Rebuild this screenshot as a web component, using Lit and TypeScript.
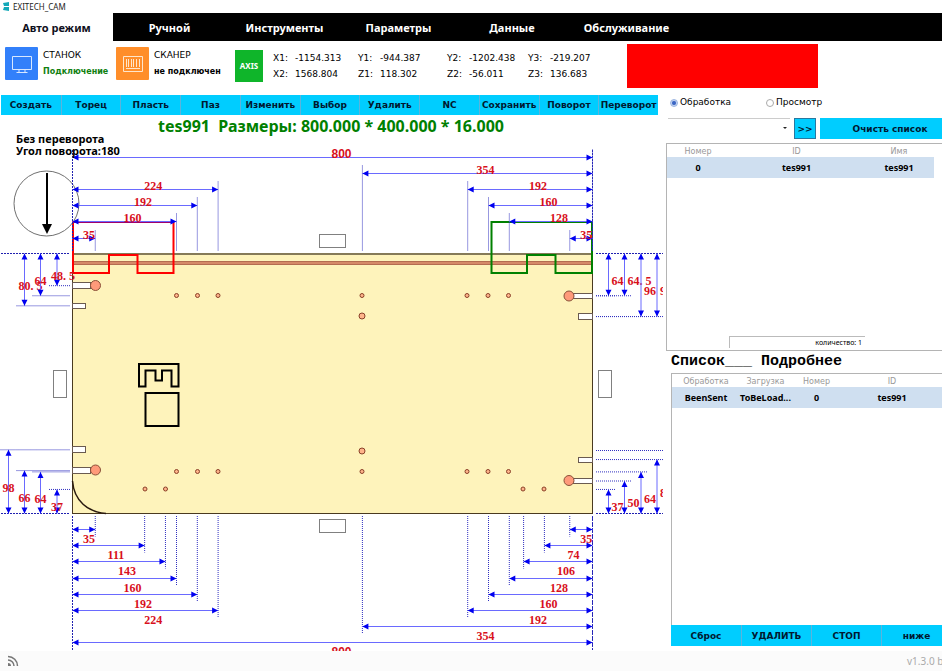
import { LitElement, html, svg, css } from "lit";
import { customElement, state } from "lit/decorators.js";
import { classMap } from "lit/directives/class-map.js";

const TABS = ["Авто режим", "Ручной", "Инструменты", "Параметры", "Данные", "Обслуживание"];
const TOOLS = ["Создать", "Торец", "Пласть", "Паз", "Изменить", "Выбор", "Удалить", "NC", "Сохранить", "Поворот", "Переворот"];
const AXES: [string, string][] = [
  ["X1:", "-1154.313"], ["Y1:", "-944.387"], ["Y2:", "-1202.438"], ["Y3:", "-219.207"],
  ["X2:", "1568.804"], ["Z1:", "118.302"], ["Z2:", "-56.011"], ["Z3:", "136.683"],
];

/* Board geometry in drawing units; one millimetre is 0.65 units. */
const SCALE = 0.65;
const L = 72.5;
const R = 592.5;
const T = 253.5;
const B = 513.5;

type HDim = { mm: number; y: number; from: "l" | "r" };
type VDim = { mm: number; x: number; from: "t" | "b"; side: "l" | "r"; text: string };

const TOP: HDim[] = [
  { mm: 800, y: 157.5, from: "l" },
  { mm: 224, y: 189.5, from: "l" }, { mm: 192, y: 205.5, from: "l" },
  { mm: 160, y: 221.5, from: "l" }, { mm: 35, y: 238.5, from: "l" },
  { mm: 354, y: 173.5, from: "r" }, { mm: 192, y: 189.5, from: "r" },
  { mm: 160, y: 205.5, from: "r" }, { mm: 128, y: 221.5, from: "r" },
  { mm: 35, y: 238.5, from: "r" },
];
const BOTTOM: HDim[] = [
  { mm: 35, y: 529.5, from: "l" }, { mm: 111, y: 545.5, from: "l" },
  { mm: 143, y: 561.5, from: "l" }, { mm: 160, y: 578.5, from: "l" },
  { mm: 192, y: 594.5, from: "l" }, { mm: 224, y: 610.5, from: "l" },
  { mm: 800, y: 642.5, from: "l" },
  { mm: 35, y: 529.5, from: "r" }, { mm: 74, y: 545.5, from: "r" },
  { mm: 106, y: 561.5, from: "r" }, { mm: 128, y: 578.5, from: "r" },
  { mm: 160, y: 594.5, from: "r" }, { mm: 192, y: 610.5, from: "r" },
  { mm: 354, y: 626.5, from: "r" },
];
const SIDES: VDim[] = [
  { mm: 80.5, x: 24.5, from: "t", side: "l", text: "80. 5" },
  { mm: 65, x: 40.5, from: "t", side: "l", text: "64" },
  { mm: 49.5, x: 57, from: "t", side: "l", text: "48. 5" },
  { mm: 98, x: 8.5, from: "b", side: "l", text: "98" },
  { mm: 66, x: 24.5, from: "b", side: "l", text: "66" },
  { mm: 64, x: 40.5, from: "b", side: "l", text: "64" },
  { mm: 37, x: 57, from: "b", side: "l", text: "37" },
  { mm: 65, x: 608.5, from: "t", side: "r", text: "64" },
  { mm: 65, x: 624.5, from: "t", side: "r", text: "64. 5" },
  { mm: 97, x: 641, from: "t", side: "r", text: "96" },
  { mm: 97, x: 657, from: "t", side: "r", text: "96" },
  { mm: 37, x: 608.5, from: "b", side: "r", text: "37" },
  { mm: 50, x: 624.5, from: "b", side: "r", text: "50" },
  { mm: 64, x: 641, from: "b", side: "r", text: "64" },
  { mm: 83, x: 657, from: "b", side: "r", text: "82" },
];
const HOLES: [number, number, number][] = [
  ...[176.5, 197.5, 218, 362, 467, 488, 508.5].flatMap((x): [number, number, number][] => [[x, 295.5, 2], [x, 471.5, 2]]),
  ...[145, 165.5, 523, 544].map((x): [number, number, number] => [x, 489, 2]),
  [362, 316, 3], [362, 451, 3],
  [95.5, 285.5, 5], [95.5, 470, 5], [569, 296, 5], [569, 480.5, 5],
];
const SLOTS: [number, number, number, number][] = [
  [72.5, 282.5, 18, 6], [72.5, 303.5, 13, 5], [72.5, 446.5, 13, 6], [72.5, 467.5, 18, 6],
  [573.5, 293.5, 19, 5], [578.5, 313.5, 14, 6], [578.5, 457.5, 14, 5], [573.5, 478.5, 19, 5],
];
const CLAMPS: [number, number, number, number][] = [
  [319.5, 234.5, 26, 13], [319.5, 519.5, 26, 13], [53.5, 370.5, 13, 27], [598.5, 370.5, 13, 27],
];

function hDim(d: HDim, top: boolean) {
  const a = d.from === "l" ? L : R - d.mm * SCALE;
  const b = d.from === "l" ? L + d.mm * SCALE : R;
  const free = d.from === "l" ? b : a;
  const y = d.y;
  return svg`
    <line class="ext" x1=${free} x2=${free} y1=${top ? y - 8 : 516} y2=${top ? 251 : y + 7}></line>
    <line class="dim" x1=${a} x2=${b} y1=${y} y2=${y}></line>
    <path class="head" d="M${a} ${y}l6 -3v6zM${b} ${y}l-6 -3v6z"></path>
    <text class=${classMap({ num: true, sans: d.mm === 800 })} x=${(a + b) / 2 - 1} y=${top ? y + 0.5 : y + 13}>${d.mm}</text>`;
}

function vDim(d: VDim) {
  const a = d.from === "t" ? T : B - d.mm * SCALE;
  const b = d.from === "t" ? T + d.mm * SCALE : B;
  const free = d.from === "t" ? b : a;
  const left = d.side === "l";
  const x = d.x;
  return svg`
    <line class="ext" y1=${free} y2=${free} x1=${left ? x - 8 : 596} x2=${left ? 70 : x + 7}></line>
    <line class="dim" x1=${x} x2=${x} y1=${a} y2=${b}></line>
    <path class="head" d="M${x} ${a}l-3 6h6zM${x} ${b}l-3 -6h6z"></path>
    <text class="num" x=${left ? x - 6 : x + 3} y=${(a + b) / 2 + 10}>${d.text}</text>`;
}

@customElement("board-plan")
export class BoardPlan extends LitElement {
  static styles = css`
    :host { display: block; }
    svg { display: block; width: 100%; height: auto; overflow: hidden; }
    .ext { stroke: #3030c0; stroke-width: 1; stroke-dasharray: 1 1; }
    .edge { stroke: #2020b0; stroke-width: 1; stroke-dasharray: 2 1; }
    .dim { stroke: #6a6aff; stroke-width: 1; }
    .head { fill: #0000f0; }
    .num { font: bold 12px "Liberation Serif", serif; fill: #d8101c; }
    .sans { font-family: "Liberation Sans", sans-serif; }
    .board { fill: #fef3bb; stroke: #4a3a20; }
    .rim { stroke: #857a58; stroke-width: 2; }
    .groove { fill: #d58a68; stroke: #b46c50; }
    .hole { fill: #ffb48a; stroke: #8a4028; }
    .drill { fill: #ff9a7a; stroke: #8a5038; }
    .slot { fill: #fff; stroke: #6a5a50; }
    .clamp { fill: #fff; stroke: #808080; }
    .ring { fill: none; stroke: #707070; }
    .thin { fill: none; stroke: #2a1a10; stroke-width: 1.5; }
    .mark { fill: none; stroke: #000; stroke-width: 2; }
    .red { fill: none; stroke: #ff0000; stroke-width: 2; }
    .lap { stroke: #a0006a; stroke-width: 2; }
    .green { fill: none; stroke: #008000; stroke-width: 2; }
    .note { font: bold 11px "Noto Sans", sans-serif; fill: #000; }
  `;

  render() {
    return html`<svg viewBox="0 135 663 516" role="img" aria-label="Чертёж детали">
      <rect class="board" x=${L} y=${T} width=${R - L} height=${B - T}></rect>
      <line class="rim" x1=${L} x2=${R} y1="254" y2="254"></line>
      <rect class="groove" x=${L} y="261.5" width=${R - L} height="3"></rect>
      ${CLAMPS.map(([x, y, w, h]) => svg`<rect class="clamp" x=${x} y=${y} width=${w} height=${h}></rect>`)}
      ${SLOTS.map(([x, y, w, h]) => svg`<rect class="slot" x=${x} y=${y} width=${w} height=${h}></rect>`)}
      ${HOLES.map(([x, y, r]) => svg`<circle class=${r > 3 ? "drill" : "hole"} cx=${x} cy=${y} r=${r}></circle>`)}
      <path class="thin" d="M72.5 481C74 501 88 512 106 513.5"></path>
      <path class="mark" d="M139 364H178.500V386.500H171.500V370.500H162V380.500H155.500V370.500H145.500V386.500H139Z"></path>
      <rect class="mark" x="145.500" y="393" width="33" height="33"></rect>
      <path class="green" d="M491.500 222H592V273H555.500V255H527V273H491.500Z"></path>
      <path class="red" d="M73 222H173.500V273H137.500V255H109V273H73Z"></path>
      <line class="lap" x1="73" x2="173" y1="222" y2="222"></line>
      <circle class="ring" cx="46.500" cy="203.500" r="32.500"></circle>
      <path class="mark" d="M47 173V226"></path>
      <path d="M47 234l-5 -10h10z"></path>
      <line class="edge" x1=${L} x2=${L} y1="150" y2="251"></line>
      <line class="edge" x1=${R} x2=${R} y1="150" y2="251"></line>
      <line class="edge" x1=${L} x2=${L} y1="516" y2="651"></line>
      <line class="edge" x1=${R} x2=${R} y1="516" y2="651"></line>
      <line class="edge" x1="1" x2="70" y1=${T} y2=${T}></line>
      <line class="edge" x1="1" x2="70" y1=${B} y2=${B}></line>
      <line class="edge" x1="596" x2="663" y1=${T} y2=${T}></line>
      <line class="edge" x1="596" x2="663" y1=${B} y2=${B}></line>
      <line class="ext" x1="596" x2="663" y1="450.500" y2="450.500"></line>
      ${TOP.map((d) => hDim(d, true))}
      ${BOTTOM.map((d) => hDim(d, false))}
      ${SIDES.map(vDim)}
      <text class="note" x="16" y="143">Без переворота</text>
      <text class="note" x="16" y="155">Угол поворота:180</text>
    </svg>`;
  }
}

@customElement("app-root")
export class AppRoot extends LitElement {
  @state() private tab = 0;

  static styles = css`
    :host { display: flex; flex-direction: column; min-height: 100vh; overflow: hidden; background: #fff; color: #000; font: 10px "Noto Sans", sans-serif; }
    * { box-sizing: border-box; }
    button, select, input { font: inherit; color: inherit; margin: 0; padding: 0; border: 0; border-radius: 0; }
    .title { display: flex; align-items: center; gap: 4px; height: 13px; padding-left: 3px; font-size: 8px; line-height: 13px; color: #222; }
    .nav { display: grid; grid-template-columns: 113px 113px 117px 111px 116px 113px; height: 28px; background: #000; }
    .tab { background: #000; color: #fff; font-size: 11px; font-weight: bold; }
    .tab.on { background: #fff; color: #101020; }
    .status { display: flex; align-items: flex-start; height: 54px; padding: 3px 0 0 5px; font: 9px "DejaVu Sans", sans-serif; }
    .device { display: grid; grid-template-columns: 33px 1fr; column-gap: 5px; width: 111px; padding-top: 3px; white-space: nowrap; }
    .device.scan { width: 119px; }
    .device svg { grid-row: span 2; }
    .device span { line-height: 16px; }
    .state { font-weight: bold; font-size: 8px; }
    .ok { color: #108010; }
    .axis { width: 28px; height: 32px; margin-top: 6px; background: #0fb52a; color: #fff; font: bold 8px/32px "Noto Sans", sans-serif; text-align: center; }
    .axes { display: grid; grid-template-columns: 85px 89px 81px 99px; margin: 6px 0 0 10px; line-height: 16px; }
    .cell { display: flex; }
    .cell b { width: 22px; font-weight: normal; }
    .alarm { width: 191px; height: 44px; background: #f00; }
    .main { display: grid; grid-template-columns: minmax(0, 1fr) 276px; flex: 1; }
    .tools { display: grid; grid-template-columns: repeat(11, minmax(0, 1fr)); height: 20px; margin: 0 8px 0 1px; }
    .cyan { background: #00cdff; color: #001830; font: bold 9px "DejaVu Sans", sans-serif; white-space: nowrap; }
    .tools .cyan + .cyan, .actions .cyan + .cyan { border-left: 1px solid #5cb4dc; }
    .size { margin: 0; height: 20px; padding-right: 4px; font-size: 16px; line-height: 22px; font-weight: bold; color: #008000; text-align: center; white-space: pre; }
    board-plan { margin-right: 3px; }
    .side { display: flex; flex-direction: column; overflow: hidden; }
    .modes { display: flex; height: 15px; padding-left: 4px; font: 9px/15px "DejaVu Sans", sans-serif; }
    .modes label { display: flex; align-items: center; gap: 2px; width: 96px; }
    .modes input { width: 8px; height: 8px; appearance: none; border: 1px solid #aaa; border-radius: 50%; background: #fff; }
    .modes input:checked { border-color: #9ab4e0; background: radial-gradient(#3b66c4 35%, #c4d4f2 60%); }
    .pick { display: flex; gap: 4px; height: 21px; margin: 8px 0 4px 2px; }
    .combo { position: relative; flex: none; width: 122px; border-top: 1px solid #ccc; }
    .combo select { width: 100%; height: 19px; appearance: none; background: none; }
    .combo::after { content: ""; position: absolute; right: 3px; top: 8px; border: 2px solid transparent; border-top-color: #222; pointer-events: none; }
    .go { flex: none; width: 22px; border: 1px solid #2878a0; }
    .clear { flex: none; width: 140px; }
    .panel { display: flex; flex-direction: column; border: 1px solid #b4b4b4; border-right: 0; }
    .queue { height: 208px; }
    .details { flex: 1; margin-left: 5px; border-bottom: 0; }
    table { border-collapse: collapse; table-layout: fixed; flex: none; width: 267px; }
    .details table { width: 270px; }
    th, td { padding: 0; text-align: center; white-space: nowrap; }
    th { height: 13px; padding-top: 3px; color: #999; font: 8px/10px "DejaVu Sans", sans-serif; }
    td { height: 21px; background: #cfdff0; font: bold 9px/21px "Noto Sans", sans-serif; }
    .c62 { width: 62px; } .c135 { width: 135px; } .c70 { width: 70px; } .c68 { width: 68px; } .c51 { width: 51px; } .c100 { width: 100px; }
    .count { width: 136px; height: 12px; margin: auto 0 2px 62px; padding-right: 3px; border: 1px solid #bbb; border-width: 1px 0 0 1px; font-size: 7px; line-height: 11px; text-align: right; }
    .views { height: 22px; margin: 0 0 0 5px; font: bold 15px/22px "Liberation Mono", monospace; white-space: pre; }
    .actions { display: grid; grid-template-columns: repeat(4, 70px); height: 21px; margin: 0 0 5px 5px; }
    .foot { display: flex; align-items: center; justify-content: space-between; height: 20px; padding-left: 7px; background: #fbfbfb; overflow: hidden; }
    .version { width: 35px; color: #aaa; font-size: 10px; white-space: nowrap; }
  `;

  render() {
    return html`
      <div class="title">
        <svg width="6" height="9" viewBox="0 0 6 9"><path fill="#12a8b8" d="M0 1L6 0V4H1zM1 5H6V9L0 8z"></path></svg>
        <span>EXITECH_CAM</span>
      </div>
      <nav class="nav">
        ${TABS.map((t, i) => html`<button class=${classMap({ tab: true, on: i === this.tab })} @click=${() => (this.tab = i)}>${t}</button>`)}
      </nav>
      <header class="status">
        <div class="device">
          <svg width="33" height="33" viewBox="0 0 33 33"><rect width="33" height="33" rx="1" fill="#3280fa"></rect><path fill="none" stroke="#d8e8ff" d="M7.500 9.500H26.500V22.500H7.500ZM14 22.500V25.500M20 22.500V25.500M11.500 25.500H22.500"></path></svg>
          <span>СТАНОК</span><span class="state ok">Подключение</span>
        </div>
        <div class="device scan">
          <svg width="33" height="33" viewBox="0 0 33 33"><rect width="33" height="33" rx="1" fill="#ff8e2a"></rect><path fill="none" stroke="#ffe6cc" d="M7.500 9.500H26.500V24.500H7.500ZM10.500 12V20M12.500 12V20M15.500 12V20M17.500 12V20M20.500 12V20M23.500 12V20M10 21.500H24"></path></svg>
          <span>СКАНЕР</span><span class="state">не подключен</span>
        </div>
        <div class="axis">AXIS</div>
        <div class="axes">
          ${AXES.map(([k, v]) => html`<div class="cell"><b>${k}</b><span>${v}</span></div>`)}
        </div>
        <div class="alarm"></div>
      </header>
      <main class="main">
        <section>
          <div class="tools">${TOOLS.map((t) => html`<button class="cyan">${t}</button>`)}</div>
          <h1 class="size">tes991  Размеры: 800.000 * 400.000 * 16.000</h1>
          <board-plan></board-plan>
        </section>
        <aside class="side">
          <div class="modes">
            <label><input type="radio" name="mode" checked />Обработка</label>
            <label><input type="radio" name="mode" />Просмотр</label>
          </div>
          <div class="pick">
            <div class="combo"><select aria-label="Программа"><option></option></select></div>
            <button class="cyan go">&gt;&gt;</button>
            <button class="cyan clear">Очисть список</button>
          </div>
          <div class="panel queue">
            <table>
              <thead><tr><th class="c62">Номер</th><th class="c135">ID</th><th class="c70">Имя</th></tr></thead>
              <tbody><tr><td>0</td><td>tes991</td><td>tes991</td></tr></tbody>
            </table>
            <div class="count">количество: 1</div>
          </div>
          <h2 class="views">Список___ Подробнее</h2>
          <div class="panel details">
            <table>
              <thead><tr><th class="c68">Обработка</th><th class="c51">Загрузка</th><th class="c51">Номер</th><th class="c100">ID</th></tr></thead>
              <tbody><tr><td>BeenSent</td><td>ToBeLoad...</td><td>0</td><td>tes991</td></tr></tbody>
            </table>
          </div>
          <div class="actions">
            ${["Сброс", "УДАЛИТЬ", "СТОП", "ниже"].map((t) => html`<button class="cyan">${t}</button>`)}
          </div>
        </aside>
      </main>
      <footer class="foot">
        <svg width="12" height="12" viewBox="0 0 12 12"><path fill="none" stroke="#777" stroke-width="1.500" d="M1 1.500A9.500 9.500 0 0 1 10.500 11M1 5A6 6 0 0 1 7 11"></path><path fill="#777" d="M1 8A3 3 0 0 1 4 11H1Z"></path></svg>
        <span class="version">v1.3.0 build</span>
      </footer>
    `;
  }
}
